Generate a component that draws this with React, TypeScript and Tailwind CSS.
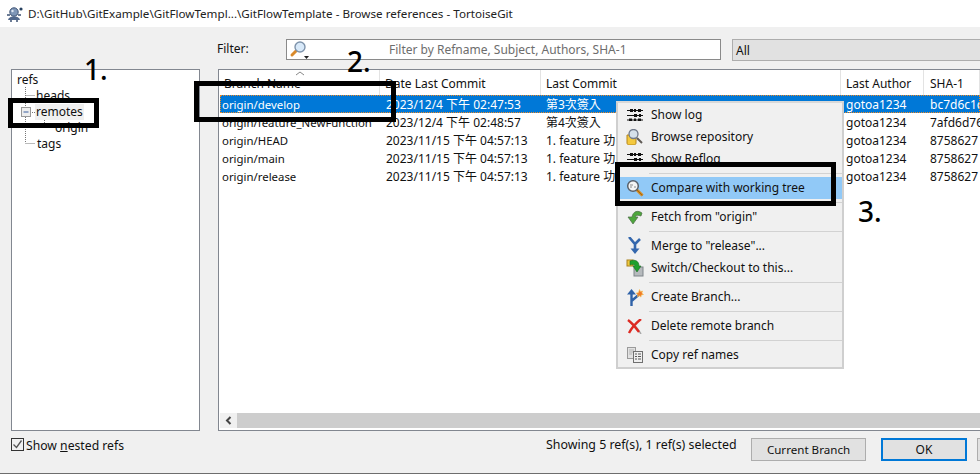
import React from "react";

const font = { fontFamily: '"Noto Sans","Noto Sans CJK TC",sans-serif' };

const LogIcon = () => (
  <svg width="16" height="12" viewBox="0 0 16 12">
    <g stroke="#111" strokeWidth="1"><path d="M0 1.5h16M0 6.5h16M0 11h16" /></g>
    <g fill="#111"><rect x="3" y="0" width="3" height="3" /><rect x="7" y="0" width="2" height="3" /><rect x="11" y="0" width="3" height="3" /><rect x="7" y="5" width="3" height="3" /><rect x="12" y="5" width="2" height="3" /><rect x="2" y="9.5" width="3" height="2.5" /><rect x="7" y="9.5" width="2" height="2.5" /><rect x="11" y="9.5" width="3" height="2.5" /></g>
  </svg>
);
const BrowseIcon = () => (
  <svg width="18" height="16" viewBox="0 0 18 16">
    <path d="M1 6h9v8c0 1-1 2-2 2H3c-1 0-2-1-2-2z" fill="#f4c93f" stroke="#b5861a" />
    <path d="M11 9l5 5" stroke="#5f5a55" strokeWidth="2" />
    <circle cx="7.5" cy="5" r="4.5" fill="#d5e0ea" stroke="#70798a" strokeWidth="1.3" />
  </svg>
);
const CompareIcon = () => (
  <svg width="18" height="18" viewBox="0 0 18 18">
    <path d="M10.5 10.5l6 6" stroke="#d68a1e" strokeWidth="3" />
    <path d="M10.5 10.5l6 6" stroke="#7a4d0f" strokeWidth=".6" />
    <circle cx="7" cy="7" r="5.3" fill="#f5f5f5" stroke="#59606a" strokeWidth="1.5" />
    <path d="M4 6h3M8 8h2M4 8h2" stroke="#8a8a8a" />
  </svg>
);
const FetchIcon = () => (
  <svg width="16" height="15" viewBox="0 0 16 15">
    <path d="M15 3C11 0 6 1 5 7H1l5 7 5-7H8c1-2 3-2 6-1z" fill="#4da63c" stroke="#4d6b47" strokeWidth=".7" />
  </svg>
);
const MergeIcon = () => (
  <svg width="16" height="18" viewBox="0 0 16 18">
    <path d="M2 0l6 7 5-5M8 7v7" fill="none" stroke="#3467ad" strokeWidth="2.6" />
    <path d="M3.5 11.5h9L8 17z" fill="#3467ad" />
  </svg>
);
const SwitchIcon = () => (
  <svg width="18" height="18" viewBox="0 0 18 18">
    <rect x="8" y="8" width="9" height="9" fill="#b6babd" stroke="#7f858a" />
    <rect x="1" y="1" width="6" height="6" fill="#f0c93f" stroke="#a8801c" />
    <path d="M4 2c5-2 9 0 9 5h2l-4 6-4-6h2c0-1-2-2-5-1z" fill="#1fa02c" stroke="#1b6a24" strokeWidth=".6" />
  </svg>
);
const CreateIcon = () => (
  <svg width="18" height="18" viewBox="0 0 18 18">
    <path d="M5.5 18V4M5.5 13l7-6" fill="none" stroke="#2f62a8" strokeWidth="2.4" />
    <path d="M1 6.5L5.5 1 10 6.5z" fill="#2f62a8" />
    <path d="M13.5 1.5l1 2 2.2-.4-.9 2 1.7 1.4-2.2.4-.3 2.2-1.7-1.4-1.9 1 .4-2.1-1.6-1.5 2.2-.3z" fill="#ef7a27" stroke="#f7c458" strokeWidth=".6" />
  </svg>
);
const DeleteIcon = () => (
  <svg width="16" height="15" viewBox="0 0 16 15">
    <path d="M2 2c4 2 8 7 11 12" fill="none" stroke="#a9a9a9" strokeWidth="1.5" transform="translate(1 1)" />
    <path d="M1 1c4 3 8 8 11 12M14 0C9 4 5 8 2 14" fill="none" stroke="#dd2a22" strokeWidth="2.4" />
  </svg>
);
const CopyIcon = () => (
  <svg width="16" height="16" viewBox="0 0 16 16">
    <rect x=".5" y=".5" width="8" height="11" fill="#e2e2e2" stroke="#9a9a9a" />
    <path d="M2 3h5M2 5h5M2 7h3" stroke="#b5b5b5" />
    <rect x="6.5" y="4.5" width="9" height="11" fill="#efefef" stroke="#707070" />
    <path d="M8 7h2M8 9.5h2M8 12h2M11 7h3M11 9.5h3M11 12h3" stroke="#5a5a5a" />
  </svg>
);

type Entry = { label: string; icon: React.ReactNode; sep?: boolean; hi?: boolean };
const menu: Entry[] = [
  { label: "Show log", icon: <LogIcon /> },
  { label: "Browse repository", icon: <BrowseIcon /> },
  { label: "Show Reflog", icon: <LogIcon />, sep: true },
  { label: "Compare with working tree", icon: <CompareIcon />, sep: true, hi: true },
  { label: 'Fetch from "origin"', icon: <FetchIcon />, sep: true },
  { label: 'Merge to "release"...', icon: <MergeIcon /> },
  { label: "Switch/Checkout to this...", icon: <SwitchIcon />, sep: true },
  { label: "Create Branch...", icon: <CreateIcon />, sep: true },
  { label: "Delete remote branch", icon: <DeleteIcon />, sep: true },
  { label: "Copy ref names", icon: <CopyIcon /> },
];

const rows = [
  ["origin/develop", "2023/12/4 下午 02:47:53", "第3次簽入", "gotoa1234", "bc7d6c1c"],
  ["origin/feature_NewFunction", "2023/12/4 下午 02:48:57", "第4次簽入", "gotoa1234", "7afd6d76"],
  ["origin/HEAD", "2023/11/15 下午 04:57:13", "1. feature 功", "gotoa1234", "8758627"],
  ["origin/main", "2023/11/15 下午 04:57:13", "1. feature 功", "gotoa1234", "8758627"],
  ["origin/release", "2023/11/15 下午 04:57:13", "1. feature 功", "gotoa1234", "8758627"],
];

const headers = ["Branch Name", "Date Last Commit", "Last Commit", "Last Author", "SHA-1"];

export default function App() {
  return (
    <div className="relative w-[980px] h-[474px] flex flex-col overflow-hidden bg-[#f0f0f0] text-[12px] leading-[18px] text-[#111]" style={font}>
      <div className="h-[27px] shrink-0 bg-white flex items-center pl-[7px] gap-[5px]">
        <svg width="16" height="16" viewBox="0 0 16 16">
          <circle cx="7" cy="6" r="4.2" fill="#7f97b8" stroke="#3d5273" />
          <circle cx="5.5" cy="5" r="1.2" fill="#dfe8f4" />
          <path d="M1 14c1-5 11-5 12 0z" fill="#51688c" />
          <path d="M0 9h3M11 9h3M3 15h2M9 15h2" stroke="#3d5273" strokeWidth="1.3" />
          <circle cx="14" cy="3" r="1.6" fill="#26405f" />
        </svg>
        <span className="text-[11.65px] text-[#222] whitespace-nowrap">D:\GitHub\GitExample\GitFlowTempl...\GitFlowTemplate - Browse references - TortoiseGit</span>
      </div>

      <div className="flex-1 flex flex-col border-b border-[#6d6d6d] min-h-0">
        <div className="flex h-[404px] pt-[12px] pl-[11px]">
          {/* tree */}
          <div className="w-[189px] mt-[30px] h-[362px] border border-[#828790] bg-white pt-[2px] pl-[5px] relative">
            <svg className="absolute left-0 top-0" width="60" height="90" viewBox="0 0 60 90">
              <g stroke="#777" strokeDasharray="1 1" fill="none">
                <path d="M13.5 17v56M13.5 25.5h9M18 42.5h5M32.5 48v9.5h9M13.5 73.5h10" />
              </g>
              <rect x="9.5" y="37.5" width="9" height="9" fill="#eee" stroke="#999" />
              <path d="M11.5 42h5" stroke="#3a5f9f" />
            </svg>
            <div className="relative h-[16px] leading-[16px]">refs</div>
            <div className="relative h-[16px] leading-[16px] pl-[19px]">heads</div>
            <div className="relative h-[16px] leading-[16px] pl-[18px]"><span className="bg-[#f0f0f0] px-[1px] inline-block w-[49px]">remotes</span></div>
            <div className="relative h-[16px] leading-[16px] pl-[38px]">origin</div>
            <div className="relative h-[16px] leading-[16px] pl-[20px]">tags</div>
          </div>

          <div className="ml-[18px] flex-1 flex flex-col min-w-0">
            {/* filter */}
            <div className="flex h-[30px] items-start">
              <span className="w-[69px] h-[20px] leading-[20px] -ml-[1px]">Filter:</span>
              <div className="w-[435px] h-[21px] border border-[#8a8a8a] bg-white flex items-center relative">
                <svg className="ml-[2px]" width="20" height="19" viewBox="0 0 20 19">
                  <path d="M8 10l-5 5" stroke="#d98a2c" strokeWidth="3" strokeLinecap="round" />
                  <circle cx="11" cy="7" r="5" fill="#d8e9f9" stroke="#7e93ab" strokeWidth="1.4" />
                  <path d="M15 16h5l-2.5 3z" fill="#222" />
                </svg>
                <span className="ml-[80px] text-[#6d6d6d] whitespace-nowrap">Filter by Refname, Subject, Authors, SHA-1</span>
              </div>
              <div className="ml-[11px] flex-1 h-[22px] border border-[#adadad] border-r-0 bg-[#e1e1e1] pl-[3px] leading-[21px]">All</div>
            </div>

            {/* list */}
            <div className="h-[362px] border border-[#828790] border-r-0 bg-white flex flex-col overflow-hidden">
              <div className="grid grid-cols-[161px_161px_300px_83px_1fr] h-[25px] relative">
                {headers.map((h, i) => (
                  <div key={h} className={`border-r border-[#e3e3e3] leading-[27px] whitespace-nowrap relative overflow-hidden ${i === 4 ? "pl-[6px]" : "pl-[5px]"}`}>
                    {i === 0 && (
                      <svg className="absolute left-[76px] top-0" width="10" height="6" viewBox="0 0 10 6">
                        <path d="M1 5l4-3 4 3" fill="none" stroke="#888" />
                      </svg>
                    )}
                    {h}
                  </div>
                ))}
              </div>
              <div className="flex-1">
                {rows.map((r, idx) => (
                  <div
                    key={r[0]}
                    className={`grid grid-cols-[160px_161px_300px_83px_1fr] ml-[1px] h-[18px] leading-[20px] ${idx === 0 ? "bg-[#0078d7] text-white outline-1 -outline-offset-1 outline-dotted outline-[#f08a24]" : ""}`}
                  >
                    {r.map((c, i) => (
                      <div key={i} className={`whitespace-nowrap overflow-hidden ${i === 0 ? "pl-[2px] text-[11.4px]" : i === 1 ? "pl-[6px]" : i === 4 ? "pl-[6px]" : "pl-[5px]"}`}>{c}</div>
                    ))}
                  </div>
                ))}
              </div>
              <div className="h-[15px] mb-[2px] flex">
                <div className="w-[17px] ml-[1px] bg-[#f0f0f0] flex items-center justify-center">
                  <svg width="7" height="9" viewBox="0 0 7 9"><path d="M5.5 1L2 4.5 5.5 8" fill="none" stroke="#444" strokeWidth="2" /></svg>
                </div>
                <div className="flex-1 bg-[#cdcdcd]" />
              </div>
            </div>
          </div>
        </div>

        {/* bottom */}
        <div className="flex items-start pt-[7px] pl-[11px]">
          <div className="flex items-start w-[535px] shrink-0">
            <span className="w-[13px] h-[13px] border border-[#333] flex items-center justify-center bg-[#f0f0f0]">
              <svg width="11" height="11" viewBox="0 0 11 11"><path d="M1.5 5.5l3 3 5-7" fill="none" stroke="#555" strokeWidth="1.3" /></svg>
            </span>
            <span className="ml-[2px] -mt-[1px] text-[12.2px]">Show <span className="underline">n</span>ested refs</span>
          </div>
          <span className="whitespace-nowrap w-[205px] shrink-0 -mt-[2px] text-[12.4px]">Showing 5 ref(s), 1 ref(s) selected</span>
          <button className="w-[115px] shrink-0 h-[23px] border border-[#adadad] bg-[#e1e1e1] leading-[21px] text-center text-[11.6px]">Current Branch</button>
          <button className="ml-[15px] w-[86px] shrink-0 h-[23px] border-2 border-[#0078d7] bg-[#e1e1e1] leading-[19px] text-center">OK</button>
          <span className="ml-[10px] w-[20px] shrink-0 h-[23px] border border-[#adadad] border-r-0 bg-[#e1e1e1]" />
        </div>
      </div>

      {/* context menu */}
      <div className="absolute left-[616px] top-[101px] w-[228px] border-2 border-[#cfcfcf] border-t-[#d8d8d8] bg-[#f0f0f0] py-[1px]">
        {menu.map((m) => (
          <React.Fragment key={m.label}>
            <div className={`flex items-center h-[22px] ${m.hi ? "bg-[#91c9f7]" : ""}`}>
              <span className="w-[33px] flex justify-center shrink-0">{m.icon}</span>
              <span className="whitespace-nowrap">{m.label}</span>
            </div>
            {m.sep && <div className="h-[7px] ml-[31px] flex items-center"><div className="h-px w-full bg-[#d2d2d2]" /></div>}
          </React.Fragment>
        ))}
      </div>

      {/* annotations */}
      <div className="absolute left-[8px] top-[98px] w-[91px] h-[30px] border-[5px] border-black" />
      <div className="absolute left-[194px] top-[81px] w-[202px] h-[41px] border-[5px] border-black" />
      <div className="absolute left-[615px] top-[162px] w-[221px] h-[44px] border-[5px] border-black" />
      <span className="absolute left-[84px] top-[51px] text-[28px] leading-[36px] font-medium text-black">1.</span>
      <span className="absolute left-[347px] top-[43px] text-[28px] leading-[36px] font-medium text-black">2.</span>
      <span className="absolute left-[858px] top-[193px] text-[28px] leading-[36px] font-medium text-black">3.</span>
    </div>
  );
}
